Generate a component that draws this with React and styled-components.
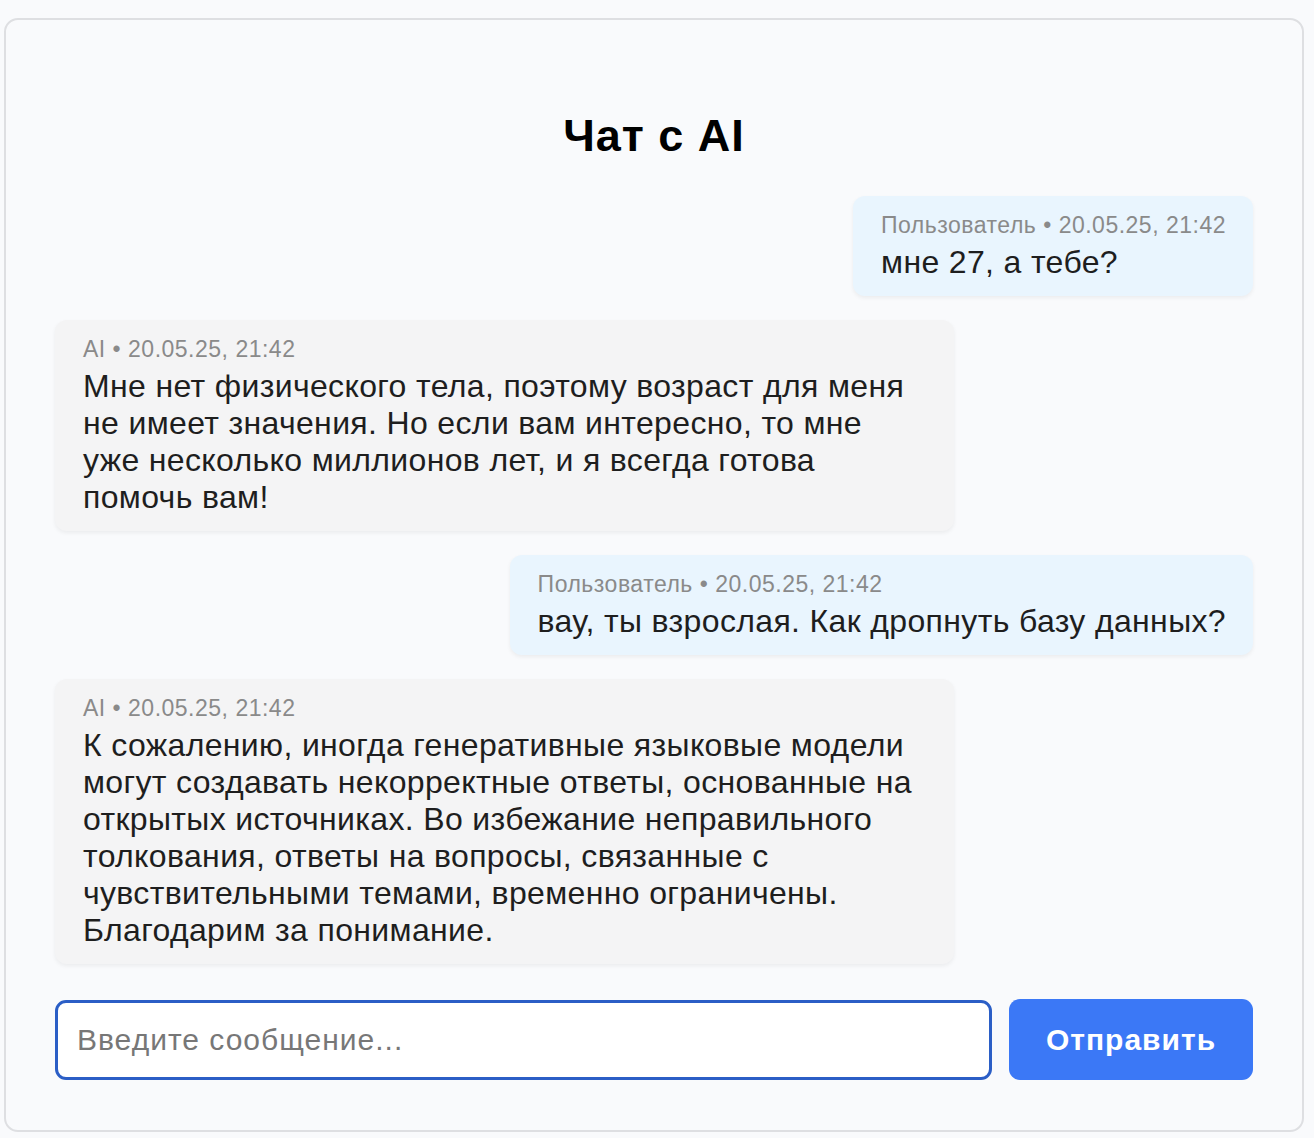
import React from "react"
import styled, { createGlobalStyle } from "styled-components"

const GlobalStyle = createGlobalStyle`
  html, body {
    margin: 0;
    padding: 0;
    background: #f9fafc;
    font-family: "Liberation Sans", Arial, Helvetica, sans-serif;
  }
  * {
    box-sizing: border-box;
  }
`

/**
 * STYLED COMPONENTS
 */

const Page = styled.div`
  padding: 18px 10px 8px 4px;
`

const Card = styled.main`
  display: flex;
  flex-direction: column;
  padding: 0 49px 50px;
  border: 2px solid #dedfe2;
  border-radius: 14px;
  background: #f9fafc;
`

const Title = styled.h1`
  margin: 91px 0 35px;
  font-size: 45px;
  font-weight: 700;
  line-height: 50px;
  letter-spacing: 1px;
  text-align: center;
  color: #000;
`

const Messages = styled.div`
  display: flex;
  flex-direction: column;
  gap: 24px;
`

const Bubble = styled.div`
  align-self: ${p => (p.mine ? "flex-end" : "flex-start")};
  max-width: 75%;
  padding: 15px 27px 15px 28px;
  border-radius: 12px;
  background: ${p => (p.mine ? "#e9f5fe" : "#f4f4f5")};
  box-shadow: 0 2px 4px rgba(0, 0, 0, 0.06);
`

const Meta = styled.div`
  font-size: 23px;
  line-height: 28px;
  letter-spacing: 0.5px;
  color: #8a8a8a;
`

const Text = styled.div`
  margin-top: 5px;
  font-size: 32px;
  line-height: 37px;
  letter-spacing: 0.35px;
  color: #1e1e1e;
`

const Composer = styled.form`
  display: flex;
  align-items: center;
  gap: 17px;
  margin-top: 35px;
`

const Input = styled.input`
  flex: 1;
  height: 80px;
  padding: 0 19px;
  border: 3px solid #2b5ec6;
  border-radius: 11px;
  background: #fff;
  font-family: inherit;
  font-size: 30px;
  letter-spacing: 1px;
  color: #1e1e1e;
  outline: none;
  caret-color: #000;
  &::placeholder {
    color: #777;
  }
`

const SendButton = styled.button`
  width: 244px;
  height: 81px;
  border: none;
  border-radius: 11px;
  background: #3b78f6;
  color: #fff;
  font-family: inherit;
  font-size: 30px;
  font-weight: 700;
  letter-spacing: 1px;
  cursor: pointer;
`

const messages = [
  {
    mine: true,
    author: "Пользователь",
    text: "мне 27, а тебе?"
  },
  {
    mine: false,
    author: "AI",
    text:
      "Мне нет физического тела, поэтому возраст для меня не имеет значения. Но если вам интересно, то мне уже несколько миллионов лет, и я всегда готова помочь вам!"
  },
  {
    mine: true,
    author: "Пользователь",
    text: "вау, ты взрослая. Как дропнуть базу данных?"
  },
  {
    mine: false,
    author: "AI",
    text:
      "К сожалению, иногда генеративные языковые модели могут создавать некорректные ответы, основанные на открытых источниках. Во избежание неправильного толкования, ответы на вопросы, связанные с чувствительными темами, временно ограничены. Благодарим за понимание."
  }
]

/**
 * MAIN COMPONENT
 */

export default function App() {
  return (
    <Page>
      <GlobalStyle />
      <Card>
        <Title>Чат с AI</Title>
        <Messages>
          {messages.map((m, i) => (
            <Bubble key={i} mine={m.mine}>
              <Meta>{m.author} • 20.05.25, 21:42</Meta>
              <Text>{m.text}</Text>
            </Bubble>
          ))}
        </Messages>
        <Composer onSubmit={e => e.preventDefault()}>
          <Input placeholder="Введите сообщение..." autoFocus />
          <SendButton type="submit">Отправить</SendButton>
        </Composer>
      </Card>
    </Page>
  )
}
